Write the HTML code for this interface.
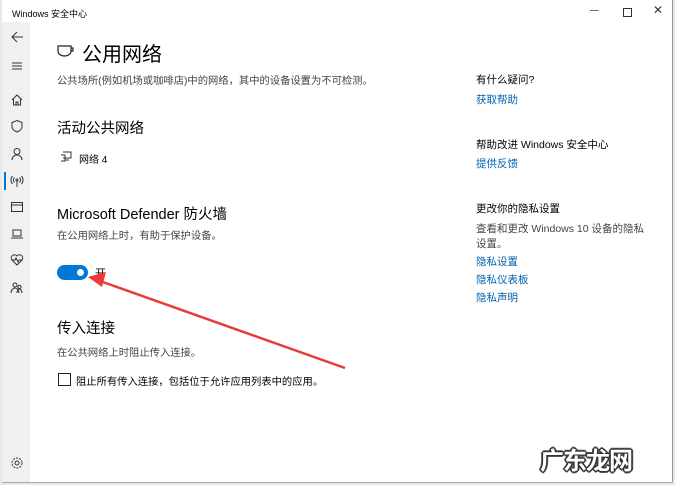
<!DOCTYPE html><html><head><meta charset="utf-8"><style>
body{margin:0;width:675px;height:485px;background:#e8e8e8;position:relative;overflow:hidden;font-family:"Liberation Sans","Noto Sans CJK SC",sans-serif;color:#000}
.win{position:absolute;left:2px;top:0;width:670px;height:482px;background:#fff;border-right:1px solid #999;border-bottom:1px solid #aaa}
.side{position:absolute;left:0;top:22px;width:28px;height:460px;background:#f0f0f0}
.t{position:absolute;white-space:nowrap}
.ic{position:absolute;left:8px;width:14px;height:14px}
.b{color:#0063b1}
.g{color:#444}
</style></head><body>
<div class="win">
<div class="t" style="left:10px;top:7px;font-size:9px">Windows 安全中心</div>
<div class="t" style="left:588px;top:3px;font-size:12px;color:#555">─</div>
<div style="position:absolute;left:621px;top:8px;width:7px;height:7px;border:1px solid #333"></div>
<div class="t" style="left:651px;top:3px;font-size:12px;color:#333">✕</div>
<div class="side">
<svg class="ic" style="top:8px" viewBox="0 0 14 14" fill="none" stroke="#333" stroke-width="1"><path d="M13 7H2M7 2L2 7l5 5"/></svg>
<svg class="ic" style="top:37px" viewBox="0 0 14 14" stroke="#333"><path d="M2 4h10M2 7h10M2 10h10"/></svg>
<svg class="ic" style="top:71px" viewBox="0 0 14 14" fill="none" stroke="#333"><path d="M2 7L7 2l5 5M3.5 6v6h7V6M6 12V9h2v3"/></svg>
<svg class="ic" style="top:97px" viewBox="0 0 14 14" fill="none" stroke="#333"><path d="M7 1.5l5 2v4c0 3-2.5 4.5-5 5.5-2.5-1-5-2.5-5-5.5v-4z"/></svg>
<svg class="ic" style="top:125px" viewBox="0 0 14 14" fill="none" stroke="#333"><circle cx="7" cy="4.5" r="3"/><path d="M2 13c0-3 2.5-5 5-5s5 2 5 5"/></svg>
<div style="position:absolute;left:2px;top:150px;width:2px;height:18px;background:#0078d7"></div>
<svg class="ic" style="top:152px" viewBox="0 0 14 14" fill="none" stroke="#333"><circle cx="7" cy="6" r="1"/><path d="M7 7v6M4.5 3.5a3.5 3.5 0 000 5M9.5 3.5a3.5 3.5 0 010 5M2.5 2a6 6 0 000 8M11.5 2a6 6 0 010 8"/></svg>
<svg class="ic" style="top:178px" viewBox="0 0 14 14" fill="none" stroke="#333"><rect x="1.5" y="2.5" width="11" height="9"/><path d="M1.5 5h11"/></svg>
<svg class="ic" style="top:205px" viewBox="0 0 14 14" fill="none" stroke="#333"><path d="M3 3h8v6H3zM1 11h12"/></svg>
<svg class="ic" style="top:231px" viewBox="0 0 14 14" fill="none" stroke="#333"><path d="M7 12L2 7a3 3 0 015-4 3 3 0 015 4zM2 7h3l1-2 2 4 1-2h3"/></svg>
<svg class="ic" style="top:259px" viewBox="0 0 14 14" fill="none" stroke="#333"><circle cx="5" cy="4" r="2"/><circle cx="9.5" cy="6" r="1.6"/><path d="M1 12c0-3 2-5 4-5s4 2 4 5M7 12c0-2 1-4 2.5-4S12 10 12 12"/></svg>
<svg class="ic" style="top:434px" viewBox="0 0 14 14" fill="none" stroke="#333"><circle cx="7" cy="7" r="2"/><circle cx="7" cy="7" r="5" stroke-dasharray="2 1.2"/></svg>
</div>
<svg style="position:absolute;left:55px;top:44px" width="18" height="14" viewBox="0 0 18 14" fill="none" stroke="#222" stroke-width="1.2"><path d="M1 2h13v5c0 3-3 5-6.5 5S1 10 1 7zM14 4h2v3h-2"/></svg>
<div class="t" style="left:80px;top:38px;font-size:20px">公用网络</div>
<div class="t g" style="left:55px;top:72px;font-size:10.3px">公共场所(例如机场或咖啡店)中的网络，其中的设备设置为不可检测。</div>
<div class="t" style="left:55px;top:117px;font-size:14.5px">活动公共网络</div>
<svg style="position:absolute;left:58px;top:151px" width="12" height="11" viewBox="0 0 12 11" fill="none" stroke="#333"><path d="M3 1h8v6H3M1 4h4v6H1M5 9h4"/></svg>
<div class="t" style="left:77px;top:151px;font-size:10px">网络 4</div>
<div class="t" style="left:55px;top:203px;font-size:14.5px">Microsoft Defender 防火墙</div>
<div class="t g" style="left:55px;top:227px;font-size:10.3px">在公用网络上时，有助于保护设备。</div>
<div style="position:absolute;left:55px;top:265px;width:31px;height:15px;border-radius:8px;background:#0078d7"></div>
<div style="position:absolute;left:75px;top:269px;width:7px;height:7px;border-radius:50%;background:#fff"></div>
<div class="t" style="left:93px;top:265px;font-size:11px">开</div>
<div class="t" style="left:55px;top:317px;font-size:14.5px">传入连接</div>
<div class="t g" style="left:55px;top:344px;font-size:10.3px">在公共网络上时阻止传入连接。</div>
<div style="position:absolute;left:56px;top:373px;width:11px;height:11px;border:1.5px solid #222"></div>
<div class="t" style="left:74px;top:373px;font-size:10.3px">阻止所有传入连接，包括位于允许应用列表中的应用。</div>
<div class="t" style="left:474px;top:72px;font-size:10.5px">有什么疑问?</div>
<div class="t b" style="left:474px;top:92px;font-size:10.5px">获取帮助</div>
<div class="t" style="left:474px;top:137px;font-size:10.5px">帮助改进 Windows 安全中心</div>
<div class="t b" style="left:474px;top:156px;font-size:10.5px">提供反馈</div>
<div class="t" style="left:474px;top:201px;font-size:10.5px">更改你的隐私设置</div>
<div class="t g" style="left:474px;top:222px;font-size:10.5px;line-height:15px">查看和更改 Windows 10 设备的隐私<br>设置。</div>
<div class="t b" style="left:474px;top:254px;font-size:10.5px">隐私设置</div>
<div class="t b" style="left:474px;top:272px;font-size:10.5px">隐私仪表板</div>
<div class="t b" style="left:474px;top:290px;font-size:10.5px">隐私声明</div>
</div>
<svg style="position:absolute;left:0;top:0" width="675" height="485"><path d="M345 368L100 281" stroke="#e83a3a" stroke-width="2.5"/><path d="M88 277l18-5-4 15z" fill="#e83a3a"/></svg>
<div class="t" style="left:540px;top:441px;font-size:24px;font-weight:bold;color:#fff;letter-spacing:-1px;text-shadow:1px 0 #333,-1px 0 #333,0 1px #333,0 -1px #333,1px 1px #333,-1px -1px #333,1px -1px #333,-1px 1px #333,2px 0 #555,-2px 0 #555,0 2px #555,0 -2px #555">广东龙网</div>
</body></html>
